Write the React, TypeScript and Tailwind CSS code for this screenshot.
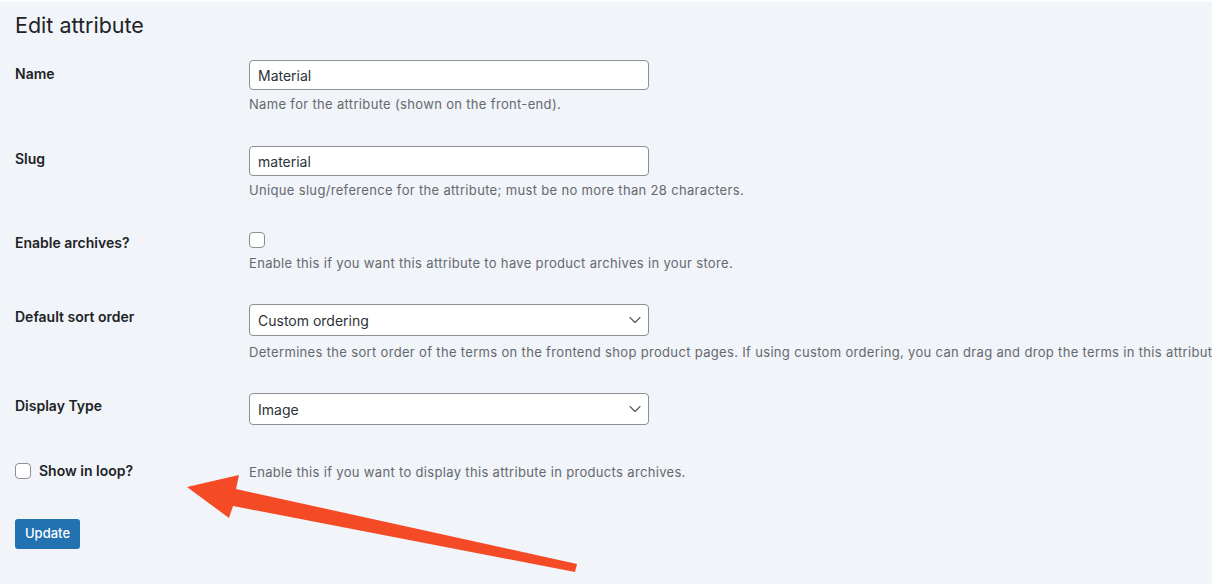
import { ChevronDown } from "lucide-react";

const font = { fontFamily: "Inter, 'Noto Sans', 'Liberation Sans', sans-serif" };

function Checkbox() {
  return (
    <input
      type="checkbox"
      className="appearance-none w-4 h-4 rounded-[4px] border border-[#8c8f94] bg-white shrink-0 block"
    />
  );
}

function Select({ value }: { value: string }) {
  return (
    <div className="w-[400px] h-[32px] rounded-[4px] border border-[#8c8f94] bg-white flex items-center justify-between pl-[8px] pr-[3px] text-[14px] text-[#2c3338]">
      <span>{value}</span>
      <ChevronDown size={20} strokeWidth={1.3} className="text-[#50575e]" />
    </div>
  );
}

function Description({ text, className = "" }: { text: string; className?: string }) {
  return (
    <p
      className={`text-[13px] leading-5 tracking-[0.33px] text-[#646970] whitespace-nowrap ${className}`}
    >
      {text}
    </p>
  );
}

export default function App() {
  return (
    <div
      className="relative min-h-[584px] w-[1212px] overflow-hidden bg-[#f1f4f8] text-[#1d2327]"
      style={font}
    >
      <div className="h-[2px] bg-[#fbfcfd]" />
      <div className="pl-[15px]">
        <h1 className="mt-[9px] text-[21.5px] leading-[29px] font-normal text-[#1d2327]">
          Edit attribute
        </h1>

        <div className="mt-[20px] grid grid-cols-[234px_1fr]">
          {/* Name */}
          <label className="pt-[4px] text-[14px] leading-5 font-semibold">Name</label>
          <div>
            <div className="w-[400px] h-[30px] rounded-[4px] border border-[#8c8f94] bg-white flex items-center px-[8px] text-[14px] text-[#2c3338]">
              Material
            </div>
            <Description className="mt-[4px]" text="Name for the attribute (shown on the front-end)." />
          </div>

          {/* Slug */}
          <label className="mt-[32px] pt-[3px] text-[14px] leading-5 font-semibold">Slug</label>
          <div className="mt-[32px]">
            <div className="w-[400px] h-[30px] rounded-[4px] border border-[#8c8f94] bg-white flex items-center px-[8px] text-[14px] text-[#2c3338]">
              material
            </div>
            <Description
              className="mt-[4px]"
              text="Unique slug/reference for the attribute; must be no more than 28 characters."
            />
          </div>

          {/* Enable archives */}
          <label className="mt-[32px] pt-[1px] text-[14px] leading-5 font-semibold">Enable archives?</label>
          <div className="mt-[32px]">
            <Checkbox />
            <Description
              className="mt-[5px]"
              text="Enable this if you want this attribute to have product archives in your store."
            />
          </div>

          {/* Default sort order */}
          <label className="mt-[31px] pt-[3px] text-[14px] leading-5 font-semibold">Default sort order</label>
          <div className="mt-[31px]">
            <Select value="Custom ordering" />
            <Description
              className="mt-[6px]"
              text="Determines the sort order of the terms on the frontend shop product pages. If using custom ordering, you can drag and drop the terms in this attribute."
            />
          </div>

          {/* Display Type */}
          <label className="mt-[31px] pt-[3px] text-[14px] leading-5 font-semibold">Display Type</label>
          <div className="mt-[31px]">
            <Select value="Image" />
          </div>

          {/* Show in loop */}
          <div className="mt-[34px] flex items-center gap-[8px]">
            <Checkbox />
            <span className="text-[14px] leading-5 font-semibold">Show in loop?</span>
          </div>
          <div className="mt-[37px]">
            <Description text="Enable this if you want to display this attribute in products archives." />
          </div>
        </div>

        <button className="mt-[37px] h-[30px] px-[10px] rounded-[3px] bg-[#2271b1] text-white text-[13px] font-medium">
          Update
        </button>
      </div>

      {/* annotation arrow */}
      <svg
        className="absolute left-0 top-0 pointer-events-none"
        width="1212"
        height="584"
        viewBox="0 0 1212 584"
      >
        <polygon
          points="187,487 239,475 236,489 577,564 575,572 233,506 229,518"
          fill="#f44a25"
        />
      </svg>
    </div>
  );
}
